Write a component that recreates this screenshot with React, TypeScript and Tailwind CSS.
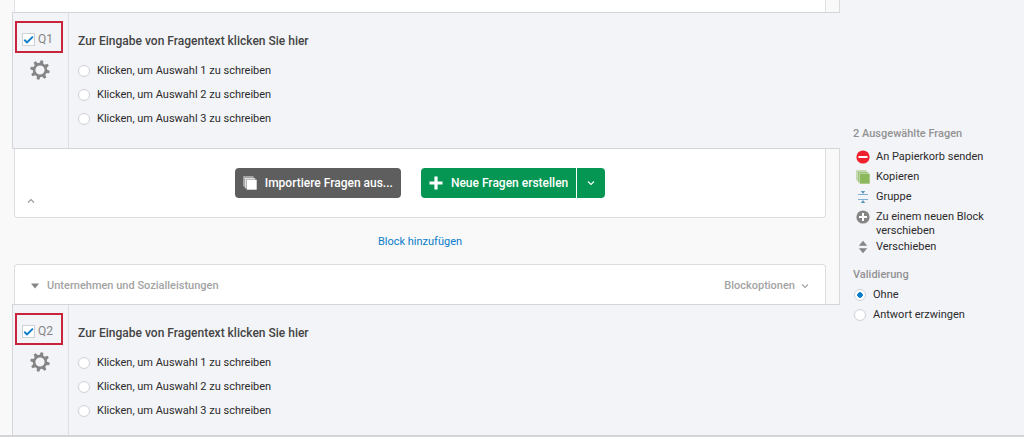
import { ReactNode, useState } from 'react';

function Gear() {
  return (
    <svg viewBox="0 0 20 20" className="size-5" aria-hidden="true">
      <g fill="#858585" transform="rotate(12 10 10)">
        {[0, 45, 90, 135, 180, 225, 270, 315].map((a) => (
          <path key={a} d="M8 4.4 L8.7 0.3 H11.3 L12 4.4 Z" transform={`rotate(${a} 10 10)`} />
        ))}
      </g>
      <circle cx="10" cy="10" r="5.9" fill="none" stroke="#858585" strokeWidth="2.6" />
    </svg>
  );
}

function Chevron({ up = false, className }: { up?: boolean; className: string }) {
  return (
    <svg viewBox="0 0 8 6" className={className} fill="none" stroke="currentColor" strokeWidth="1.1" aria-hidden="true">
      <path d={up ? 'M1 4.5 L4 1.5 L7 4.5' : 'M1 1.5 L4 4.5 L7 1.5'} />
    </svg>
  );
}

function Copies({ className }: { className: string }) {
  return (
    <svg viewBox="0 0 14 14" className={className} fill="currentColor" aria-hidden="true">
      <path d="M0.3 0.3 H10.6 V1.7 H1.7 V10.6 H0.3 Z" opacity="0.6" />
      <path d="M1.9 1.9 H12.2 V3.4 H3.4 V12.2 H1.9 Z" opacity="0.8" />
      <rect x="3.7" y="3.7" width="10" height="10" />
    </svg>
  );
}

const radio =
  "size-3 shrink-0 appearance-none rounded-full border border-[#d0d1d4] bg-white checked:bg-[radial-gradient(circle,#0a7cc9_0_2.5px,#ffffff_3px)]";

function Question({ id, className }: { id: string; className: string }) {
  const [checked, setChecked] = useState(true);
  return (
    <section className={`ml-3 flex border-l border-t border-[#d3d5d9] bg-[#f3f4f8] ${className}`}>
      <div className="flex w-14 shrink-0 flex-col items-start border-r border-[#dddfe3] pl-0.5 pt-2">
        <label className="flex h-8 w-12 items-center gap-[3px] border-2 border-[#c8243b] pl-[5px] pt-1 text-xs text-[#858585]">
          <span className="relative flex">
            <input
              type="checkbox"
              checked={checked}
              onChange={(e) => setChecked(e.target.checked)}
              className="size-[13px] appearance-none border border-[#d0d1d4] bg-white"
            />
            {checked && (
              <svg viewBox="0 0 13 13" className="pointer-events-none absolute inset-0 size-[13px]" fill="none" stroke="#0a7cc9" strokeWidth="1.9" aria-hidden="true">
                <path d="M2.3 6.8 L5 9.4 L10.9 3.6" />
              </svg>
            )}
          </span>
          {id}
        </label>
        <button type="button" aria-label="Frageoptionen" className="ml-[15px] mt-[7px]">
          <Gear />
        </button>
      </div>
      <fieldset className="min-w-0 flex-1 pl-[9px]">
        <legend className="pt-[18px] text-xs font-medium leading-5 text-[#444444]">Zur Eingabe von Fragentext klicken Sie hier</legend>
        <div className="flex flex-col pt-2 text-[11px]">
          {[1, 2, 3].map((n) => (
            <label key={n} className="flex h-6 items-center gap-[7px]">
              <input type="radio" name={id} className={radio} />
              Klicken, um Auswahl {n} zu schreiben
            </label>
          ))}
        </div>
      </fieldset>
    </section>
  );
}

function Action({ icon, children }: { icon: ReactNode; children: ReactNode }) {
  return (
    <li>
      <button type="button" className="flex min-h-5 w-full items-start gap-1.5 py-px text-left leading-3.5">
        <span className="flex size-3.5 shrink-0 items-center justify-center">{icon}</span>
        <span>{children}</span>
      </button>
    </li>
  );
}

export default function App() {
  return (
    <div className="font-['Roboto','Liberation_Sans',sans-serif] text-[11px] text-[#2b2b2b]">
      <div className="flex border-b-2 border-[#d3d5d9] bg-[#f3f4f8]">
        <main className="min-w-0 flex-1 bg-[#f9f9f9]">
          <div className="border-r border-[#d9dadc] pl-3.5 pr-[13px]">
            <div className="h-3 border-x border-[#e0e1e3] bg-white" />
          </div>
          <Question id="Q1" className="h-[137px] border-b" />
          <div className="border-r border-[#d9dadc] pl-3.5 pr-[13px]">
            <div className="flex h-[69px] items-center rounded-b-sm border-x border-b border-[#dcdddf] bg-white">
              <button type="button" aria-label="Block einklappen" className="mt-9 w-8 pl-3 text-[#999999]">
                <Chevron up className="h-1.5 w-2" />
              </button>
              <div className="flex flex-1 justify-center gap-5 pr-8 text-xs font-medium text-white">
                <button type="button" className="flex h-[30px] items-center gap-2 rounded-sm bg-[#5e5e5e] px-2">
                  <Copies className="size-3.5" />
                  Importiere Fragen aus...
                </button>
                <div className="flex gap-px">
                  <button type="button" className="flex h-[30px] items-center gap-2 rounded-l-sm bg-[#049652] px-2">
                    <svg viewBox="0 0 14 14" className="size-3.5" fill="currentColor" aria-hidden="true">
                      <path d="M5.4 0.5 H8.6 V5.4 H13.5 V8.6 H8.6 V13.5 H5.4 V8.6 H0.5 V5.4 H5.4 Z" />
                    </svg>
                    Neue Fragen erstellen
                  </button>
                  <button type="button" aria-label="Weitere Fragetypen" className="flex h-[30px] w-7 items-center justify-center rounded-r-sm bg-[#049652]">
                    <Chevron className="h-1.5 w-2" />
                  </button>
                </div>
              </div>
            </div>
            <div className="flex h-[46px] items-center justify-center pt-0.5">
              <a href="#block" className="text-[11px] text-[#0a7cc9]">Block hinzufügen</a>
            </div>
            <header className="flex h-10 items-center justify-between rounded-t-sm border-x border-t border-[#dcdddf] bg-white px-4 pt-[3px] text-[11px] font-medium text-[#a3a3a3]">
              <button type="button" className="flex items-center gap-2">
                <svg viewBox="0 0 8 5" className="h-1.5 w-2" fill="#858585" aria-hidden="true">
                  <path d="M0 0 H8 L4 5 Z" />
                </svg>
                Unternehmen und Sozialleistungen
              </button>
              <button type="button" className="flex items-center gap-1.5">
                Blockoptionen
                <Chevron className="h-1.5 w-2" />
              </button>
            </header>
          </div>
          <Question id="Q2" className="h-[131px]" />
        </main>
        <aside className="w-[184px] shrink-0 pl-[13px] pt-[127px] text-[11px]">
          <h2 className="font-medium leading-3.5 text-[#929292]">2 Ausgewählte Fragen</h2>
          <ul className="pl-[3px] pr-6 pt-2">
            <Action
              icon={
                <svg viewBox="0 0 14 14" className="size-3.5" aria-hidden="true">
                  <circle cx="7" cy="7" r="6.6" fill="#f0222e" />
                  <rect x="2.5" y="6" width="9" height="2" fill="#fff" />
                </svg>
              }
            >
              An Papierkorb senden
            </Action>
            <Action icon={<Copies className="size-3.5 text-[#8cb85c]" />}>Kopieren</Action>
            <Action
              icon={
                <svg viewBox="0 0 14 14" className="size-3.5" aria-hidden="true">
                  <path d="M2 4.5 H12 M2 9.5 H12" stroke="#7fb0d2" strokeWidth="1" />
                  <path d="M4.8 1 H9.2 L7 4 Z M4.8 13 H9.2 L7 10 Z" fill="#5b97bf" />
                </svg>
              }
            >
              Gruppe
            </Action>
            <Action
              icon={
                <svg viewBox="0 0 14 14" className="size-3.5" aria-hidden="true">
                  <circle cx="7" cy="7" r="6.6" fill="#858585" />
                  <path d="M7 3 V11 M3 7 H11" stroke="#fff" strokeWidth="2" />
                </svg>
              }
            >
              Zu einem neuen Block verschieben
            </Action>
            <Action
              icon={
                <svg viewBox="0 0 14 14" className="size-3.5" fill="#858585" aria-hidden="true">
                  <path d="M7 0.8 L11.2 5.8 H2.8 Z M7 13.2 L11.2 8.2 H2.8 Z" />
                </svg>
              }
            >
              Verschieben
            </Action>
          </ul>
          <fieldset aria-labelledby="validation-title" className="pt-[9px]">
            <h2 id="validation-title" className="pb-[3px] font-medium leading-3.5 text-[#929292]">Validierung</h2>
            <label className="flex h-5 items-center gap-[7px] pl-px">
              <input type="radio" name="validation" defaultChecked className={radio} />
              Ohne
            </label>
            <label className="flex h-5 items-center gap-[7px] pl-px">
              <input type="radio" name="validation" className={radio} />
              Antwort erzwingen
            </label>
          </fieldset>
        </aside>
      </div>
    </div>
  );
}
